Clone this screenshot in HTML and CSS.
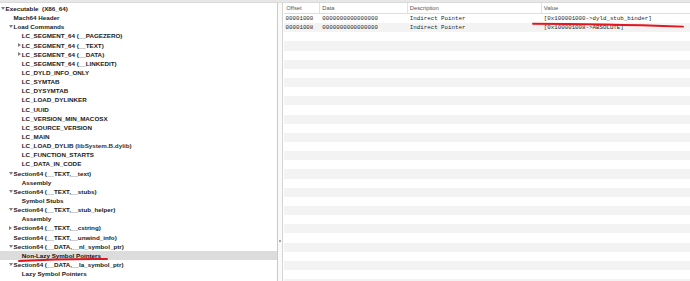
FILE: index.html
```html
<!DOCTYPE html>
<html>
<head>
<meta charset="utf-8">
<link rel="stylesheet" href="styles.css">
</head>
<body>
<div class="window">
  <div class="topbar"></div>
  <div class="main">
    <div class="tree">
      <div class="row l0"><span class="tog down"></span><span class="label">Executable  (X86_64)</span></div>
      <div class="row l1"><span class="tog"></span><span class="label">Mach64 Header</span></div>
      <div class="row l1"><span class="tog down"></span><span class="label">Load Commands</span></div>
      <div class="row l2"><span class="tog"></span><span class="label">LC_SEGMENT_64 (__PAGEZERO)</span></div>
      <div class="row l2"><span class="tog right"></span><span class="label">LC_SEGMENT_64 (__TEXT)</span></div>
      <div class="row l2"><span class="tog right"></span><span class="label">LC_SEGMENT_64 (__DATA)</span></div>
      <div class="row l2"><span class="tog"></span><span class="label">LC_SEGMENT_64 (__LINKEDIT)</span></div>
      <div class="row l2"><span class="tog"></span><span class="label">LC_DYLD_INFO_ONLY</span></div>
      <div class="row l2"><span class="tog"></span><span class="label">LC_SYMTAB</span></div>
      <div class="row l2"><span class="tog"></span><span class="label">LC_DYSYMTAB</span></div>
      <div class="row l2"><span class="tog"></span><span class="label">LC_LOAD_DYLINKER</span></div>
      <div class="row l2"><span class="tog"></span><span class="label">LC_UUID</span></div>
      <div class="row l2"><span class="tog"></span><span class="label">LC_VERSION_MIN_MACOSX</span></div>
      <div class="row l2"><span class="tog"></span><span class="label">LC_SOURCE_VERSION</span></div>
      <div class="row l2"><span class="tog"></span><span class="label">LC_MAIN</span></div>
      <div class="row l2"><span class="tog"></span><span class="label">LC_LOAD_DYLIB <span class="sub">(libSystem.B.dylib)</span></span></div>
      <div class="row l2"><span class="tog"></span><span class="label">LC_FUNCTION_STARTS</span></div>
      <div class="row l2"><span class="tog"></span><span class="label">LC_DATA_IN_CODE</span></div>
      <div class="row l1"><span class="tog down"></span><span class="label">Section64 (__TEXT,__text)</span></div>
      <div class="row l2"><span class="tog"></span><span class="label">Assembly</span></div>
      <div class="row l1"><span class="tog down"></span><span class="label">Section64 (__TEXT,__stubs)</span></div>
      <div class="row l2"><span class="tog"></span><span class="label">Symbol Stubs</span></div>
      <div class="row l1"><span class="tog down"></span><span class="label">Section64 (__TEXT,__stub_helper)</span></div>
      <div class="row l2"><span class="tog"></span><span class="label">Assembly</span></div>
      <div class="row l1"><span class="tog right"></span><span class="label">Section64 (__TEXT,__cstring)</span></div>
      <div class="row l1"><span class="tog"></span><span class="label">Section64 (__TEXT,__unwind_info)</span></div>
      <div class="row l1"><span class="tog down"></span><span class="label">Section64 (__DATA,__nl_symbol_ptr)</span></div>
      <div class="row l2 selected"><span class="tog"></span><span class="label">Non-Lazy Symbol Pointers</span></div>
      <div class="row l1"><span class="tog down"></span><span class="label">Section64 (__DATA,__la_symbol_ptr)</span></div>
      <div class="row l2"><span class="tog"></span><span class="label">Lazy Symbol Pointers</span></div>
    </div>
    <div class="splitter"><span class="handle"></span></div>
    <div class="table">
      <div class="thead">
        <div class="th c1">Offset</div>
        <div class="th c2">Data</div>
        <div class="th c3">Description</div>
        <div class="th c4">Value</div>
      </div>
      <div class="tbody">
        <div class="tr"><div class="td c1">00001000</div><div class="td c2">0000000000000000</div><div class="td c3">Indirect Pointer</div><div class="td c4">[0x100001000-&gt;dyld_stub_binder]</div></div>
        <div class="tr"><div class="td c1">00001008</div><div class="td c2">0000000000000000</div><div class="td c3">Indirect Pointer</div><div class="td c4">[0x100001008-&gt;ABSOLUTE]</div></div>
        <div class="tr"></div><div class="tr"></div><div class="tr"></div><div class="tr"></div>
        <div class="tr"></div><div class="tr"></div><div class="tr"></div><div class="tr"></div>
        <div class="tr"></div><div class="tr"></div><div class="tr"></div><div class="tr"></div>
        <div class="tr"></div><div class="tr"></div><div class="tr"></div><div class="tr"></div>
        <div class="tr"></div><div class="tr"></div><div class="tr"></div><div class="tr"></div>
        <div class="tr"></div><div class="tr"></div><div class="tr"></div><div class="tr"></div>
        <div class="tr"></div><div class="tr"></div><div class="tr"></div><div class="tr"></div>
      </div>
    </div>
  </div>
  <svg class="marks" width="690" height="281" viewBox="0 0 690 281">
    <path d="M19 261 Q60 258.6 107 259" fill="none" stroke="#e3161f" stroke-width="1.9" stroke-linecap="round"/>
    <path d="M533 23.8 Q600 23.9 683 26.6" fill="none" stroke="#e3161f" stroke-width="1.9" stroke-linecap="round"/>
  </svg>
</div>
</body>
</html>
```

FILE: styles.css
```css
html, body {
  margin: 0;
  padding: 0;
  background: #ffffff;
}
body {
  width: 690px;
  height: 281px;
  overflow: hidden;
}
.window {
  position: relative;
  width: 690px;
  height: 281px;
  display: flex;
  flex-direction: column;
}
.topbar {
  height: 2px;
  background: #e7e7e7;
  border-bottom: 1px solid #d9d9d9;
  flex: none;
}
.main {
  flex: 1;
  display: flex;
  min-height: 0;
}
.tree {
  width: 277px;
  flex: none;
  padding-top: 1px;
  background: #ffffff;
  font-family: "Liberation Sans", Arial, sans-serif;
  font-weight: bold;
  font-size: 6.25px;
  color: #1a1a1a;
  overflow: hidden;
}
.row {
  height: 9.15px;
  display: flex;
  align-items: center;
  white-space: pre;
}
.row.l0 { padding-left: 0.8px; }
.row.l1 { padding-left: 8.8px; }
.row.l2 { padding-left: 17px; }
.row.selected { background: #dcdcdc; color: #111; }
.tog {
  width: 4.8px;
  height: 4px;
  flex: none;
  position: relative;
}
.tog.down::before {
  content: "";
  position: absolute;
  left: 0;
  top: 0.5px;
  border-left: 2px solid transparent;
  border-right: 2px solid transparent;
  border-top: 3.2px solid #808080;
}
.tog.right::before {
  content: "";
  position: absolute;
  left: 0.5px;
  top: 0;
  border-top: 2px solid transparent;
  border-bottom: 2px solid transparent;
  border-left: 3.2px solid #808080;
}
.sub { font-weight: 600; color: #333; }
.splitter {
  width: 4px;
  flex: none;
  border-left: 1px solid #cacaca;
  border-right: 1px solid #d4d4d4;
  background: #fafafa;
  display: flex;
  align-items: flex-end;
  justify-content: center;
  padding-bottom: 39px;
  box-sizing: content-box;
}
.handle {
  width: 2px;
  height: 2px;
  background: #a9a9a9;
}
.table {
  flex: 1;
  display: flex;
  flex-direction: column;
  min-width: 0;
  overflow: hidden;
  padding-left: 1px;
}
.thead {
  height: 10px;
  flex: none;
  display: flex;
  border-bottom: 1px solid #dedede;
  background: #ffffff;
  font-family: "Liberation Sans", Arial, sans-serif;
  font-size: 5.8px;
  color: #555555;
}
.th {
  display: flex;
  align-items: center;
  padding-left: 2.3px;
  box-sizing: border-box;
  border-right: 1px solid #e2e2e2;
}
.th.c4 { border-right: none; }
.c1 { width: 36px; flex: none; }
.c2 { width: 87.5px; flex: none; }
.c3 { width: 134px; flex: none; }
.c4 { flex: 1; }
.tbody {
  flex: 1;
  display: flex;
  flex-direction: column;
}
.tr {
  height: 9.15px;
  flex: none;
  display: flex;
  align-items: center;
  font-family: "Liberation Mono", "Courier New", monospace;
  font-size: 5.8px;
  color: #262626;
  white-space: pre;
}
.tr:nth-child(even) { background: #f3f3f3; }
.td {
  padding-left: 2.3px;
  box-sizing: border-box;
}
.td.c1 { padding-left: 1.5px; }
.marks {
  position: absolute;
  left: 0;
  top: 0;
  pointer-events: none;
}
```
